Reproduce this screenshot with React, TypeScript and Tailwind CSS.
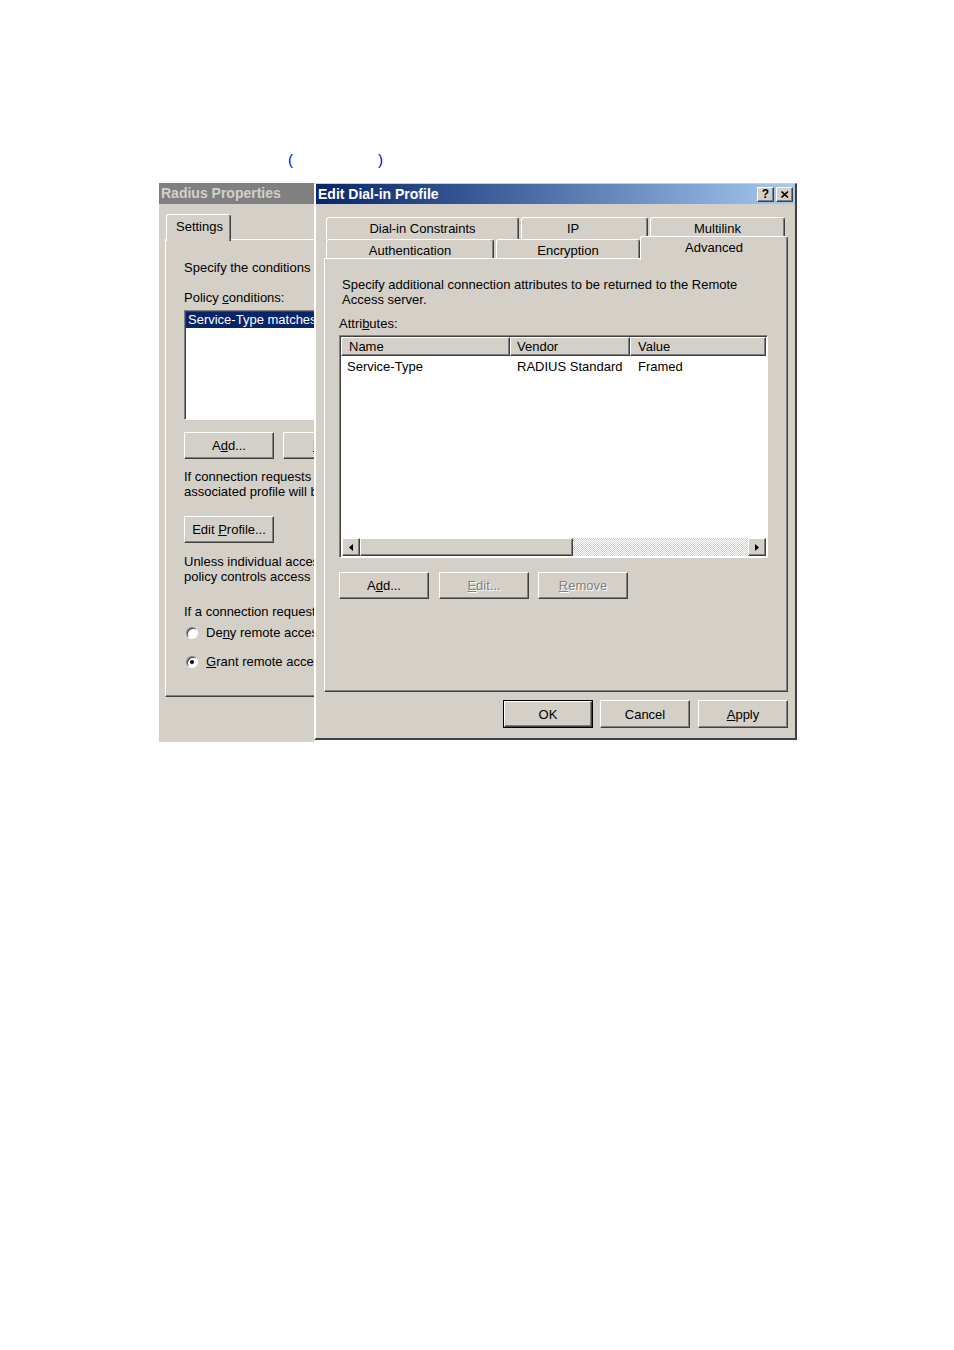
import React from 'react';

const raised =
  'border border-t-white border-l-white border-r-[#404040] border-b-[#404040] shadow-[inset_-1px_-1px_0_#808080]';
const sunken =
  'border border-t-[#808080] border-l-[#808080] border-r-white border-b-white shadow-[inset_1px_1px_0_#404040]';
const tab =
  'border-t border-l border-r border-t-white border-l-white border-r-[#404040] shadow-[inset_-1px_0_0_#808080] rounded-t-[3px] bg-[#d4d0c8]';
const disabledText = 'text-[#808080] [text-shadow:1px_1px_0_#ffffff]';

function Button({ children, className = '' }: { children: React.ReactNode; className?: string }) {
  return (
    <div className={`w-[90px] h-[27px] flex items-center justify-center bg-[#d4d0c8] whitespace-nowrap ${raised} ${className}`}>
      <span>{children}</span>
    </div>
  );
}

function Radio({ checked }: { checked?: boolean }) {
  return (
    <div className={`w-[12px] h-[12px] rounded-full bg-white flex items-center justify-center ${sunken}`}>
      {checked && <div className="w-[4px] h-[4px] rounded-full bg-black" />}
    </div>
  );
}

function LeftWindow() {
  return (
    <div className="w-[155px] h-[559px] bg-[#d4d0c8] overflow-hidden flex flex-col shrink-0">
      <div className="h-[21px] bg-[#808080] text-[#d4d0c8] font-bold text-[14px] leading-[21px] pl-[2px] whitespace-nowrap">
        Radius Properties
      </div>
      <div className="pl-[6px] mt-[10px] w-[420px]">
        <div className="flex h-[25px]">
          <div className={`relative z-10 ml-[1px] w-[65px] h-[27px] pl-[9px] pt-[4px] ${tab}`}>Settings</div>
        </div>
        <div className="h-[458px] border-t border-l border-b border-t-white border-l-white border-b-[#404040] shadow-[inset_0_-1px_0_#808080] pl-[18px] pt-[20px] whitespace-nowrap">
          <div>Specify the conditions that connection requests must match.</div>
          <div className="mt-[15px]">
            Policy <u>c</u>onditions:
          </div>
          <div className={`mt-[5px] w-[220px] h-[110px] bg-white ${sunken} p-[1px]`}>
            <div className="h-[16px] bg-[#0a246a] text-white pl-[2px] leading-[16px]">
              Service-Type matches "Framed"
            </div>
          </div>
          <div className="mt-[12px] flex gap-[9px]">
            <Button>
              A<u>d</u>d...
            </Button>
            <div className={`w-[90px] h-[27px] flex items-center pl-[29px] bg-[#d4d0c8] ${raised}`}>
              <span>
                <u>E</u>dit...
              </span>
            </div>
          </div>
          <div className="mt-[10px]">
            <div>If connection requests match the conditions specified in this policy, the</div>
            <div>associated profile will be applied to the connection.</div>
          </div>
          <Button className="mt-[17px]">
            Edit <u>P</u>rofile...
          </Button>
          <div className="mt-[11px]">
            <div>Unless individual access permissions are specified in the user profile, this</div>
            <div className="leading-[16px]">policy controls access to the network.</div>
          </div>
          <div className="mt-[19px]">If a connection request matches the specified conditions:</div>
          <div className="mt-[6px] flex items-center gap-[8px] pl-[2px]">
            <Radio />
            <span>
              De<u>n</u>y remote access permission
            </span>
          </div>
          <div className="mt-[14px] flex items-center gap-[8px] pl-[2px]">
            <Radio checked />
            <span>
              <u>G</u>rant remote access permission
            </span>
          </div>
        </div>
      </div>
    </div>
  );
}

function ScrollArrow({ dir }: { dir: 'left' | 'right' }) {
  return (
    <div className={`w-[18px] h-[18px] bg-[#d4d0c8] flex items-center justify-center ${raised}`}>
      <svg width="4" height="7" viewBox="0 0 4 7">
        <path d={dir === 'left' ? 'M4 0L0 3.5L4 7Z' : 'M0 0L4 3.5L0 7Z'} fill="#000" />
      </svg>
    </div>
  );
}

function AttributeList() {
  return (
    <div className={`mt-[4px] w-[429px] h-[223px] bg-white flex flex-col p-[1px] ${sunken}`}>
      <div className="flex h-[19px] shrink-0">
        <div className={`w-[169px] pl-[7px] pt-[1px] leading-[16px] bg-[#d4d0c8] ${raised}`}>Name</div>
        <div className={`w-[120px] pl-[6px] pt-[1px] leading-[16px] bg-[#d4d0c8] ${raised}`}>Vendor</div>
        <div className={`flex-1 pl-[7px] pt-[1px] leading-[16px] bg-[#d4d0c8] ${raised}`}>Value</div>
      </div>
      <div className="flex h-[17px] mt-[2px] leading-[17px] whitespace-nowrap">
        <div className="w-[169px] pl-[6px]">Service-Type</div>
        <div className="w-[120px] pl-[7px]">RADIUS Standard</div>
        <div className="flex-1 pl-[8px]">Framed</div>
      </div>
      <div className="flex-1" />
      <div className="flex h-[18px] shrink-0 pl-[1px]">
        <ScrollArrow dir="left" />
        <div className={`w-[213px] h-[18px] bg-[#d4d0c8] ${raised}`} />
        <div className="flex-1 bg-[repeating-conic-gradient(#ffffff_0%_25%,#d4d0c8_0%_50%)] bg-[length:2px_2px]" />
        <ScrollArrow dir="right" />
      </div>
    </div>
  );
}

function EditProfileWindow() {
  return (
    <div className="w-[483px] h-[557px] bg-[#d4d0c8] border-l-2 border-l-white border-r-2 border-r-[#404040] border-t border-t-[#d4d0c8] border-b-2 border-b-[#404040] flex flex-col shrink-0">
      <div className="h-[20px] bg-linear-to-r from-[#0a246a] to-[#a6caf0] flex items-center pl-[2px] pr-[2px]">
        <span className="text-white font-bold text-[14px] leading-[20px] flex-1 whitespace-nowrap">
          Edit Dial-in Profile
        </span>
        <div className="flex gap-[2px]">
          <div className={`w-[17px] h-[15px] bg-[#d4d0c8] flex items-center justify-center font-bold text-[12px] leading-[12px] ${raised}`}>
            ?
          </div>
          <div className={`w-[17px] h-[15px] bg-[#d4d0c8] flex items-center justify-center ${raised}`}>
            <svg width="8" height="7" viewBox="0 0 8 7">
              <path d="M0.5 0.5L7 6.5M7 0.5L0.5 6.5" stroke="#000" strokeWidth="1.6" />
            </svg>
          </div>
        </div>
      </div>

      <div className="ml-[8px] mt-[13px] w-[464px]">
        <div className="flex h-[22px] ml-[2px] gap-[2px]">
          <div className={`w-[193px] text-center pt-[3px] ${tab}`}>Dial-in Constraints</div>
          <div className={`w-[127px] pl-[45px] pt-[3px] ${tab}`}>IP</div>
          <div className={`w-[135px] text-center pt-[3px] ${tab}`}>Multilink</div>
        </div>
        <div className="flex h-[19px] ml-[2px] items-start">
          <div className={`w-[168px] h-[19px] text-center pt-[3px] ${tab}`}>Authentication</div>
          <div className={`ml-[2px] w-[144px] h-[19px] text-center pt-[3px] ${tab}`}>Encryption</div>
          <div className={`relative z-10 -mt-[3px] w-[148px] h-[24px] text-center pt-[3px] ${tab}`}>Advanced</div>
        </div>
        <div className="w-[464px] h-[434px] border border-t-white border-l-white border-r-[#404040] border-b-[#404040] shadow-[inset_-1px_-1px_0_#808080] pl-[14px] pt-[18px]">
          <div className="pl-[3px]">
            <div>Specify additional connection attributes to be returned to the Remote</div>
            <div>Access server.</div>
          </div>
          <div className="mt-[9px]">
            Attri<u>b</u>utes:
          </div>
          <AttributeList />
          <div className="mt-[14px] flex gap-[10px]">
            <Button>
              A<u>d</u>d...
            </Button>
            <Button>
              <span className={disabledText}>
                <u>E</u>dit...
              </span>
            </Button>
            <Button className="-ml-[1px]">
              <span className={disabledText}>
                <u>R</u>emove
              </span>
            </Button>
          </div>
        </div>
        <div className="mt-[8px] flex justify-end">
          <div className="w-[90px] h-[28px] border border-black">
            <div className={`w-full h-full flex items-center justify-center bg-[#d4d0c8] ${raised}`}>OK</div>
          </div>
          <Button className="ml-[7px] h-[28px]">Cancel</Button>
          <Button className="ml-[8px] h-[28px]">
            <u>A</u>pply
          </Button>
        </div>
      </div>
    </div>
  );
}

export default function App() {
  return (
    <div className="min-h-[1350px] w-full bg-white pt-[150px] font-['Liberation_Sans',Arial,sans-serif] text-[13px] leading-[15px] text-black">
      <div className="flex h-[20px] pl-[288px] text-[#0000ff] text-[15px] leading-[20px]">
        <span>(</span>
        <span className="ml-[85px]">)</span>
      </div>
      <div className="mt-[13px] ml-[159px] flex items-start">
        <LeftWindow />
        <EditProfileWindow />
      </div>
    </div>
  );
}
